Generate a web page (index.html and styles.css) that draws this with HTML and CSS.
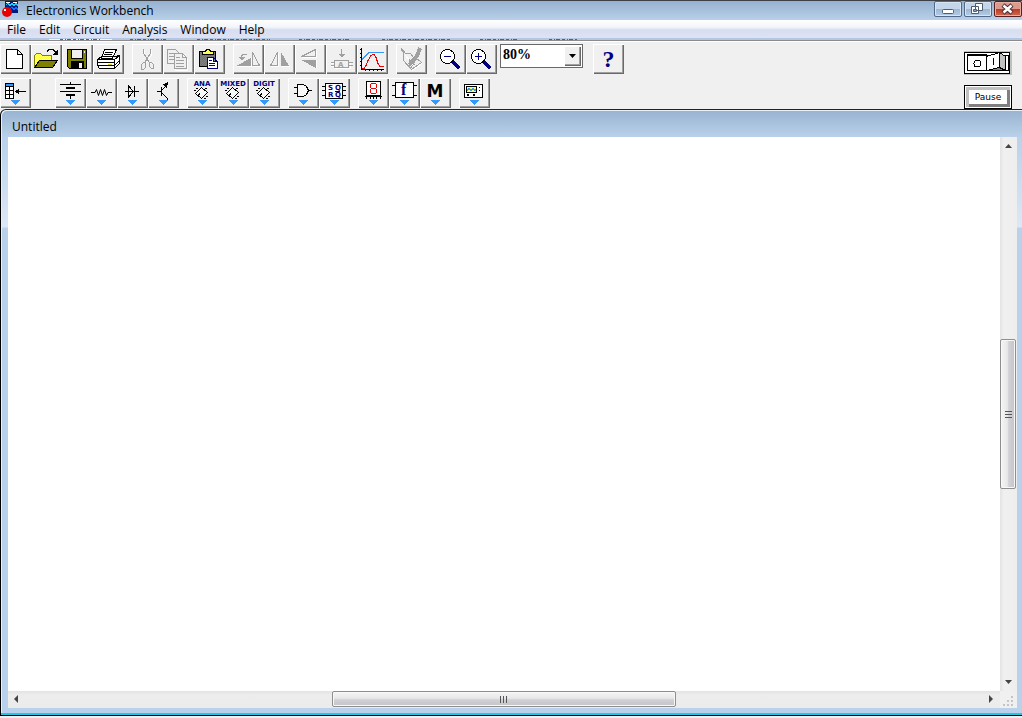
FILE: index.html
```
<!DOCTYPE html>
<html lang="en">
<head>
<meta charset="utf-8">
<meta name="viewport" content="width=device-width, initial-scale=1">
<title>Electronics Workbench</title>
<link rel="stylesheet" href="styles.css">
</head>
<body>
<div class="app">
  <header class="titlebar">
    <svg class="logo" width="20" height="20" viewBox="0 0 20 20" shape-rendering="crispEdges"><path fill="#001c80" d="M4 0h13v12H4z"/><path fill="none" stroke="#1ecbff" d="M5 4l2-2 2 3 2-3 2 3 2-3 2 3"/><path fill="none" stroke="#1e6cff" d="M9 8l2-2 2 3 2-3 2 3"/><path fill="none" stroke="#fff" d="M5 1.500h4M12 1.500h4"/><circle cx="6" cy="11" r="5" fill="#e80000" shape-rendering="auto"/><path fill="#fff" d="M3 8h2v2H3z"/><path stroke="#700" d="M9 7l3-3"/></svg>
    <h1 class="app-name">Electronics Workbench</h1>
    <div class="caption-buttons">
      <button class="cap" aria-label="Minimize"><svg width="26" height="14" viewBox="0 0 26 14"><rect x="7.500" y="7.500" width="11" height="4" rx="1" fill="#fff" stroke="#4f5d70"/></svg></button>
      <button class="cap" aria-label="Restore"><svg width="26" height="14" viewBox="0 0 26 14"><path fill="#fff" stroke="#4f5d70" d="M10.500 1.500h7v7h-7zM6.500 4.500h7v7h-7z"/><path fill="#8aa4c4" stroke="#4f5d70" d="M8.500 7.500h3v2h-3z"/></svg></button>
      <button class="cap cap-close" aria-label="Close"><svg width="26" height="14" viewBox="0 0 26 14"><path stroke="#4b3038" stroke-width="4.500" d="M8 3l9 8M17 3l-9 8"/><path stroke="#fff" stroke-width="2.500" d="M8.500 3.500l8 7M16.500 3.500l-8 7"/></svg></button>
    </div>
  </header>
  <nav class="menubar">
    <button>File</button><button>Edit</button><button>Circuit</button><button>Analysis</button><button>Window</button><button>Help</button>
  </nav>
  <div class="seam"><svg width="640" height="2" viewBox="0 0 640 2" shape-rendering="crispEdges"><path stroke="#f4f6fa" d="M49 1.500h63"/><path stroke="#3c66a8" stroke-dasharray="3 2 1 1 4 2" d="M60 1.500h40M130 1.500h36M197 1.500h73M299 1.500h50M382 1.500h69M480 1.500h38M549 1.500h28"/></svg></div>
  <section class="tools">
    <div class="rows">
      <div class="row">
        <div class="group">
          <button class="tool" aria-label="New"><svg viewBox="0 0 31 30"><path fill="#fff" stroke="#000" d="M6.500 5.500h11l5 5v14h-16zM17.500 5.500v5h5"/></svg></button>
          <button class="tool" aria-label="Open"><svg viewBox="0 0 31 30"><path fill="url(#dots)" stroke="#808000" d="M3.500 23V11.500l2-2h4l2 2h9v5"/><path fill="#808000" stroke="#000" d="M8.500 16.500h18l-5 7h-18z"/><path fill="none" stroke="#000" d="M16 7.500l2-2h4l3 3"/><path d="M27 5v6h-6z"/></svg></button>
          <button class="tool" aria-label="Save"><svg viewBox="0 0 31 30"><path fill="#808000" stroke="#000" d="M5.500 5.500h19v19h-17l-2-2z"/><path fill="#f0f0f0" stroke="#000" d="M9.500 5.500h11v9h-11z"/><path d="M9 17h13v8H9z"/><path fill="#f0f0f0" d="M17 19h3v5h-3zM22 7h1v2h-1z"/></svg></button>
          <button class="tool" aria-label="Print"><svg viewBox="0 0 31 30"><path fill="#fff" stroke="#000" d="M11.500 5.500h12l-4 9h-11zM4.500 15.500l4-3h14l4-1v8l-5 5h-15l-2-3zM4.500 15.500h17l5-4M21.500 15.500v9"/><path stroke="#000" d="M12 8.500h8M11 10.500h8M10 12.500h8M4 18.500h17M4 21.500h17M22 21l5-5"/><path stroke="#d8d000" d="M15 20h4"/></svg></button>
        </div>
        <div class="group">
          <button class="tool" aria-label="Cut"><svg viewBox="0 0 31 30"><g fill="none" stroke="#fff" transform="translate(1 1)"><path d="M11.500 5v5l6 9M18.500 5v5l-6 9"/></g><g fill="none" stroke="#a0a0a0"><path d="M11.500 5v4l6 10M18.500 5v4l-6 10"/><path d="M11.500 18.500h2v5l-2 2h-2v-5zM17.500 18.500h2l2 2v4h-2l-2-2z"/></g></svg></button>
          <button class="tool" aria-label="Copy"><svg viewBox="0 0 31 30"><g fill="#f0f0f0" stroke="#a0a0a0"><path d="M4.500 5.500h8l3 3v11h-11z"/><path d="M6 9.500h5M6 12.500h5M6 15.500h5"/><path stroke="#fff" d="M12.500 11.500h8l4 4v11h-12z"/><path d="M11.500 9.500h8l4 4v11h-12zM19.500 9.500v4h4M13 13.500h4M13 16.500h8M13 19.500h8M13 22.500h8"/></g></svg></button>
          <button class="tool" aria-label="Paste"><svg viewBox="0 0 31 30"><path fill="#808040" stroke="#000" d="M5.500 7.500h16v15h-16z"/><path fill="url(#olive)" d="M6 8h15v14H6z"/><path fill="#ffff50" stroke="#000" d="M8.500 10.500v-3h3l1-2h3l1 2h3v3z"/><path fill="#fff" stroke="#000080" d="M13.500 13.500h6l4 4v7h-10zM19.500 13.500v4h4M15 16.500h3M15 19.500h6M15 21.500h6"/></svg></button>
        </div>
        <div class="group">
          <button class="tool" aria-label="Rotate"><svg viewBox="0 0 31 30"><path fill="#a0a0a0" d="M3 22l15-8v8z"/><path fill="none" stroke="#fff" d="M4 22.500h14.500V14M20 22.500h8"/><path fill="none" stroke="#a0a0a0" d="M19.500 8.500v13h7zM8.500 15v-3l2-2h3"/><path fill="#a0a0a0" d="M5 13h7l-3 4z"/></svg></button>
          <button class="tool" aria-label="Flip horizontal"><svg viewBox="0 0 31 30"><path fill="none" stroke="#fff" d="M7 22.500h7.500V9M17 22.500h9"/><path fill="none" stroke="#a0a0a0" d="M6.500 21.500h7v-13z"/><path fill="#a0a0a0" d="M17 8v14h8z"/></svg></button>
          <button class="tool" aria-label="Flip vertical"><svg viewBox="0 0 31 30"><path fill="none" stroke="#fff" d="M7 13.500h14.500V6M21.500 16v8"/><path fill="none" stroke="#a0a0a0" d="M6.500 12.500h14v-7z"/><path fill="#a0a0a0" d="M6 16h15v8z"/></svg></button>
          <button class="tool" aria-label="Component properties"><svg viewBox="0 0 31 30"><path fill="none" stroke="#fff" d="M9 24.500h15.500V18M5 19.500h3M5 22.500h3"/><path fill="none" stroke="#a0a0a0" d="M8.500 16.500h14v7h-14zM5 18.500h3M5 21.500h3M23 18.500h4M23 21.500h4M15.500 5v8"/><path fill="#a0a0a0" d="M12 10h7l-3 4z"/><text x="12" y="23" class="t-tiny" fill="#a0a0a0">A</text></svg></button>
          <button class="tool" aria-label="Display graphs"><svg viewBox="0 0 31 30"><path fill="none" stroke="#000" d="M4.500 4v21.500H27M3 5.500h2M3 9.500h2M3 13.500h2M3 17.500h2M3 21.500h2M8.500 25v2M12.500 25v2M16.500 25v2M20.500 25v2M24.500 25v2"/><path fill="none" stroke="#3399ff" d="M5 15.500l7-7h15"/><path fill="none" stroke="#f00000" d="M5 24.500h2l2-3 2-5 3-5 2-1h1l2 3 2 6 2 3h4"/></svg></button>
        </div>
        <div class="group">
          <button class="tool" aria-label="Edit subcircuit"><svg viewBox="0 0 31 30"><g fill="none" stroke="#a0a0a0"><path d="M6.500 5.500l3 4h5l5 7-5 8-7-8v-6zM9.500 11.500l10 10M15.500 25.500l10-7-6-5-8 7zM5.500 4v3"/><path stroke="#fff" d="M9 11l9 11M16 26.500l10-7"/><path stroke-width="4" d="M24 4l-3 8-6 7"/></g><path fill="#a0a0a0" d="M13 16l5 3-5 4z"/></svg></button>
        </div>
        <div class="group">
          <button class="tool" aria-label="Zoom out"><svg viewBox="0 0 31 30"><path stroke="#000080" stroke-width="3" d="M17.500 17.500l7 7"/><circle cx="12.500" cy="12.500" r="7" fill="#fff" stroke="#000"/><path stroke="#000080" d="M9 12.500h7"/></svg></button>
          <button class="tool" aria-label="Zoom in"><svg viewBox="0 0 31 30"><path stroke="#000080" stroke-width="3" d="M17.500 17.500l7 7"/><circle cx="12.500" cy="12.500" r="7" fill="#fff" stroke="#000"/><path stroke="#000080" d="M9 12.500h7M12.500 9v7"/></svg></button>
        </div>
        <div class="combo"><select aria-label="Zoom level"><option>80%</option></select><span class="combo-arrow"><svg width="9" height="5" viewBox="0 0 9 5"><path d="M1 0h7L4.500 4z"/></svg></span></div>
        <button class="tool help" aria-label="Help">?</button>
      </div>
      <div class="row">
        <div class="group first">
          <button class="tool" aria-label="Favorites"><svg viewBox="0 0 31 30"><path fill="#fff" stroke="#000" d="M5.500 5.500h8v15h-8zM9.500 8v12M6 8.500h7M6 12.500h7M6 16.500h7"/><path fill="#3399ff" d="M6 6h7v2H6z"/><path stroke="#000" d="M16 13.500h10"/><path d="M15 13.500l4-3v6z"/><use href="#tri"/></svg></button>
        </div>
        <div class="group">
          <button class="tool" aria-label="Sources"><svg viewBox="0 0 31 30"><path stroke="#000" d="M5 6.500h21M5 13.500h21M15.500 4v3M15.500 17v4"/><path d="M11 9h9v2h-9zM11 16h9v2h-9z"/><use href="#tri"/></svg></button>
          <button class="tool" aria-label="Basic"><svg viewBox="0 0 31 30"><path fill="none" stroke="#000" shape-rendering="auto" d="M5 14.500h4l1.500-3 2 6 2-6 2 6 2-6 2 6 1.500-3h4"/><use href="#tri"/></svg></button>
          <button class="tool" aria-label="Diodes"><svg viewBox="0 0 31 30"><path fill="none" stroke="#000" d="M8 13.500h14M11.500 8v11l5-5.500zM17.500 8v11"/><use href="#tri"/></svg></button>
          <button class="tool" aria-label="Transistors"><svg viewBox="0 0 31 30"><path fill="none" stroke="#000" d="M9 13.500h4M13.500 9v9M14 12l5-5V4M14 15l5 5v2"/><path d="M14 6l5-1v6z"/><use href="#tri"/></svg></button>
        </div>
        <div class="group">
          <button class="tool" aria-label="Analog ICs"><svg viewBox="0 0 31 30"><text class="t-tag" x="15" y="8">ANA</text><use href="#chip"/><use href="#tri"/></svg></button>
          <button class="tool" aria-label="Mixed ICs"><svg viewBox="0 0 31 30"><text class="t-tag" x="15" y="8">MIXED</text><use href="#chip"/><use href="#tri"/></svg></button>
          <button class="tool" aria-label="Digital ICs"><svg viewBox="0 0 31 30"><text class="t-tag" x="15" y="8">DIGIT</text><use href="#chip"/><use href="#tri"/></svg></button>
        </div>
        <div class="group">
          <button class="tool" aria-label="Logic gates"><svg viewBox="0 0 31 30"><path fill="#f8f8f8" stroke="#000" d="M9.500 6.500h6l3 2 2 4-2 4-3 2h-6zM6 9.500h3M6 15.500h3M20 12.500h4"/><use href="#tri"/></svg></button>
          <button class="tool" aria-label="Digital"><svg viewBox="0 0 31 30"><path fill="#fff" stroke="#000" d="M6.500 5.500h17v15h-17zM3 8.500h3M3 12.500h3M3 17.500h3M24 8.500h3M24 12.500h3M24 17.500h3"/><path stroke="#000080" d="M16 13.500h5"/><text class="t-cell" x="9" y="12">S</text><text class="t-cell" x="16" y="12">Q</text><text class="t-cell" x="9" y="19">R</text><text class="t-cell" x="16" y="19">Q</text><use href="#tri"/></svg></button>
        </div>
        <div class="group">
          <button class="tool" aria-label="Indicators"><svg viewBox="0 0 31 30"><path fill="#fff" stroke="#000" d="M8.500 3.500h14v14h-14z"/><path stroke="#000" d="M7 18.500h17M8.500 18v3M12.500 18v3M15.500 18v3M18.500 18v3M22.500 18v3"/><path fill="none" stroke="#f00000" d="M13 5.500h5M13 10.500h5M13 15.500h5M12.500 6v4M18.500 6v4M12.500 11v4M18.500 11v4"/><use href="#tri"/></svg></button>
          <button class="tool" aria-label="Controls"><svg viewBox="0 0 31 30"><path fill="#fff" stroke="#000" d="M6.500 4.500h18v15h-18zM3 7.500h3M3 17.500h3M25 7.500h3M25 17.500h3"/><text class="t-f" x="12" y="17">f</text><use href="#tri"/></svg></button>
          <button class="tool" aria-label="Miscellaneous"><svg viewBox="0 0 31 30"><text class="t-m" x="15" y="19">M</text><use href="#tri"/></svg></button>
        </div>
        <div class="group">
          <button class="tool" aria-label="Instruments"><svg viewBox="0 0 31 30"><path fill="#fff" stroke="#000" d="M5.500 6.500h18v13h-18z"/><path fill="#ffff60" stroke="#000" d="M7.500 8.500h10v6h-10z"/><path fill="none" stroke="#3399ff" d="M8 12.500l2-2 2 2 2-2 2 2 1-1"/><path d="M8 16h2v2H8zM14 16h2v2h-2zM20 9h1v1h-1zM20 12h1v1h-1z"/><use href="#tri"/></svg></button>
        </div>
      </div>
    </div>
    <div class="power">
      <button class="switch" aria-label="Activate simulation"><svg width="48" height="24" viewBox="0 0 48 24" shape-rendering="crispEdges"><path fill="#c0c0c0" d="M0 0h48v24H0z"/><path fill="#fff" stroke="#000" d="M.5 1.500h45v21H.5z"/><path fill="#fff" stroke="#000" d="M3.500 4.500h41v15h-41zM3.500 3.500h19v16h-19z"/><path fill="#fff" stroke="#000" d="M22.500 5.500l13-4v15l-13 3z"/><path fill="#c0c0c0" stroke="#000" d="M35.500 1.500l6 4v14l-6-3z"/><path fill="#808080" stroke="#000" d="M22.500 19.500l13-3 6 3z"/><circle cx="13.500" cy="12.500" r="3.500" fill="none" stroke="#000"/><path stroke="#000" d="M29.500 7v7"/></svg></button>
      <button class="pause">Pause</button>
    </div>
  </section>
  <main class="doc">
    <h2 class="doc-title">Untitled</h2>
    <div class="view">
      <div class="canvas"></div>
      <div class="sb sb-v"><svg width="17" height="17" viewBox="0 0 17 17"><path fill="#444" d="M5 11h7L8.500 7z"/></svg><span class="track-a"></span><span class="thumb"><i></i><i></i><i></i></span><span class="track-b"></span><svg width="17" height="17" viewBox="0 0 17 17"><path fill="#444" d="M5 6h7l-3.500 4z"/></svg></div>
      <div class="sb sb-h"><svg width="17" height="17" viewBox="0 0 17 17"><path fill="#444" d="M10 4v8L6 8z"/></svg><span class="track-a"></span><span class="thumb"><i></i><i></i><i></i></span><span class="track-b"></span><svg width="17" height="17" viewBox="0 0 17 17"><path fill="#444" d="M6 4v8l4-4z"/></svg></div>
      <div class="grip"><svg width="17" height="17" viewBox="0 0 17 17"><path fill="#c4c4c4" d="M11 5h2v2h-2zM7 9h2v2H7zM11 9h2v2h-2zM3 13h2v2H3zM7 13h2v2H7zM11 13h2v2h-2z"/></svg></div>
    </div>
  </main>
</div>
<svg class="defs" width="0" height="0" aria-hidden="true">
  <defs>
    <pattern id="dots" width="2" height="2" patternUnits="userSpaceOnUse"><path fill="#ffff40" d="M0 0h2v2H0z"/><path fill="#fff" d="M0 0h1v1H0zM1 1h1v1H1z"/></pattern>
    <pattern id="olive" width="2" height="2" patternUnits="userSpaceOnUse"><path fill="#808000" d="M0 0h2v2H0z"/><path fill="#808080" d="M0 0h1v1H0zM1 1h1v1H1z"/></pattern>
    <path id="tri" fill="#3399ff" d="M10 22h10l-5 5z"/>
    <g id="chip" fill="none" stroke="#000"><path fill="#f8f8f8" d="M14.500 9.500l6 5-6 6-6-5z"/><path d="M11 11l-2-1M9 13l-2-1M19 18l2 1M17 20l2 1M18 11l2-1M11 16.500h2M12.500 15v2"/></g>
  </defs>
</svg>
</body>
</html>
```
FILE: styles.css
```
* { box-sizing: border-box; }
body { margin: 0; background: #f0f0f0; color: #000; font: 12px/16px "Open Sans", "Noto Sans", sans-serif; }
button { margin: 0; padding: 0; border: 0; font: inherit; color: inherit; background: none; }
svg { display: block; flex: none; }
h1, h2 { margin: 0; font-size: 12px; font-weight: 400; }
.defs { position: absolute; }

.app { display: flex; flex-direction: column; min-height: 100vh; padding-bottom: 2px; }

.titlebar { display: flex; align-items: center; height: 20px; border-top: 1px solid #3c3f44; background: linear-gradient(#96b1d0, #b8d0e9); padding-left: 1px; }
.app-name { flex: 1; margin-left: 5px; line-height: 18px; }
.caption-buttons { display: flex; align-self: flex-start; gap: 2px; }
.cap { width: 28px; height: 16px; border: 1px solid #52698a; border-radius: 2px; background: linear-gradient(#c4d6ea 48%, #9cb6d3 50%, #b4cce6); box-shadow: inset 0 0 0 1px #d8e5f3; }
.cap-close { background: linear-gradient(#dc9a8c 48%, #b83c24 50%, #d06a50); border-color: #5a2020; box-shadow: inset 0 0 0 1px #e8b0a4; }

.menubar { display: flex; height: 18px; padding: 2px 0 0 7px; gap: 13px; background: linear-gradient(#fff, #f2f5fb 40%, #d7def0 55%, #dde3f4); }
.seam { height: 3px; background: #b5c6e2; border-bottom: 1px solid #8c8c8c; overflow: hidden; }

.tools { display: flex; justify-content: space-between; background: #f0f0f0; border-top: 1px solid #fff; height: 68px; padding: 2px 10px 0 0; }
.rows { display: flex; flex-direction: column; gap: 4px; }
.row { display: flex; gap: 8px; height: 30px; }
.group { display: flex; }
.first { margin-right: 16px; }
.tool { width: 31px; height: 30px; background: #f0f0f0; box-shadow: inset 1px 1px #fff, inset -1px -1px #696969, inset -2px -2px #a0a0a0; }
.tool svg { width: 31px; height: 30px; shape-rendering: crispEdges; }
.help { margin-left: 2px; color: #000080; font: bold 24px/30px "Liberation Serif", serif; }
.combo { position: relative; width: 83px; height: 24px; margin-left: -5px; border: 1px solid #696969; background: #fff; }
.combo select { width: 100%; height: 100%; border: 0; padding: 0 0 2px 2px; appearance: none; background: none; font: bold 14px/20px "Liberation Serif", serif; color: #000; }
.combo-arrow { position: absolute; top: 1px; right: 1px; bottom: 1px; width: 17px; display: flex; align-items: center; justify-content: center; background: #f0f0f0; box-shadow: inset 1px 1px #fff, inset -1px -1px #696969, inset -2px -2px #a0a0a0; pointer-events: none; }

.t-tiny { font: bold 7px "DejaVu Sans", sans-serif; }
.t-tag { font: bold 7px "DejaVu Sans", sans-serif; fill: #000080; text-anchor: middle; }
.t-cell { font: bold 7px "DejaVu Sans", sans-serif; fill: #000080; }
.t-f { font: bold 16px "Liberation Serif", serif; fill: #000080; }
.t-m { font: bold 17px "DejaVu Sans", sans-serif; text-anchor: middle; }

.power { display: flex; flex-direction: column; gap: 10px; padding-top: 7px; }
.pause { width: 48px; height: 24px; border: 1px solid #000; background: #fff; box-shadow: inset 0 0 0 1px #fff, inset 4px 4px #c0c0c0, inset -4px -4px #808080; font: 9px/22px "DejaVu Sans", sans-serif; }

.doc { flex: 1; display: flex; flex-direction: column; border: 1px solid #000; border-top-color: #222; border-right: 0; border-radius: 6px 0 0 0; padding: 1px 5px 7px 7px; background: linear-gradient(#98b2d0, #b9d1ea 27px, #dce8f5 117px, #b9d1ea 118px); box-shadow: inset 0 -2px #20c8e8, inset 1px 1px #e8f0f8; }
.doc-title { padding: 8px 0 2px 4px; height: 26px; line-height: 16px; }
.view { flex: 1; display: grid; grid-template: 1fr 17px / 1fr 17px; }
.canvas { background: #fff; }
.sb { display: flex; background: #eee; }
.sb-v { flex-direction: column; background: linear-gradient(90deg, #e3e3e3, #f0f0f0 4px, #eee); }
.sb-h { background: linear-gradient(#e3e3e3, #ededed 4px, #ebebeb); }
.sb-v .track-a { flex: 186; }
.sb-v .track-b { flex: 186; }
.sb-v .thumb { flex: 148; margin-right: 1px; flex-direction: column; background: linear-gradient(90deg, #f5f5f5, #e8e8ea 45%, #d2d2d6 55%, #c4c4c8); }
.sb-h .track-a { flex: 307; }
.sb-h .track-b { flex: 307; }
.sb-h .thumb { flex: 343; margin-bottom: 1px; background: linear-gradient(#f5f5f5, #e8e8ea 45%, #d2d2d6 55%, #c4c4c8); }
.thumb { display: flex; align-items: center; justify-content: center; gap: 2px; border: 1px solid #8e8e8e; border-radius: 2px; box-shadow: inset 0 0 0 1px #f8f8f8; }
.thumb i { background: #555; }
.sb-v .thumb i { width: 7px; height: 1px; }
.sb-h .thumb i { width: 1px; height: 7px; }
.grip { background: #f0f0f0; }
```
